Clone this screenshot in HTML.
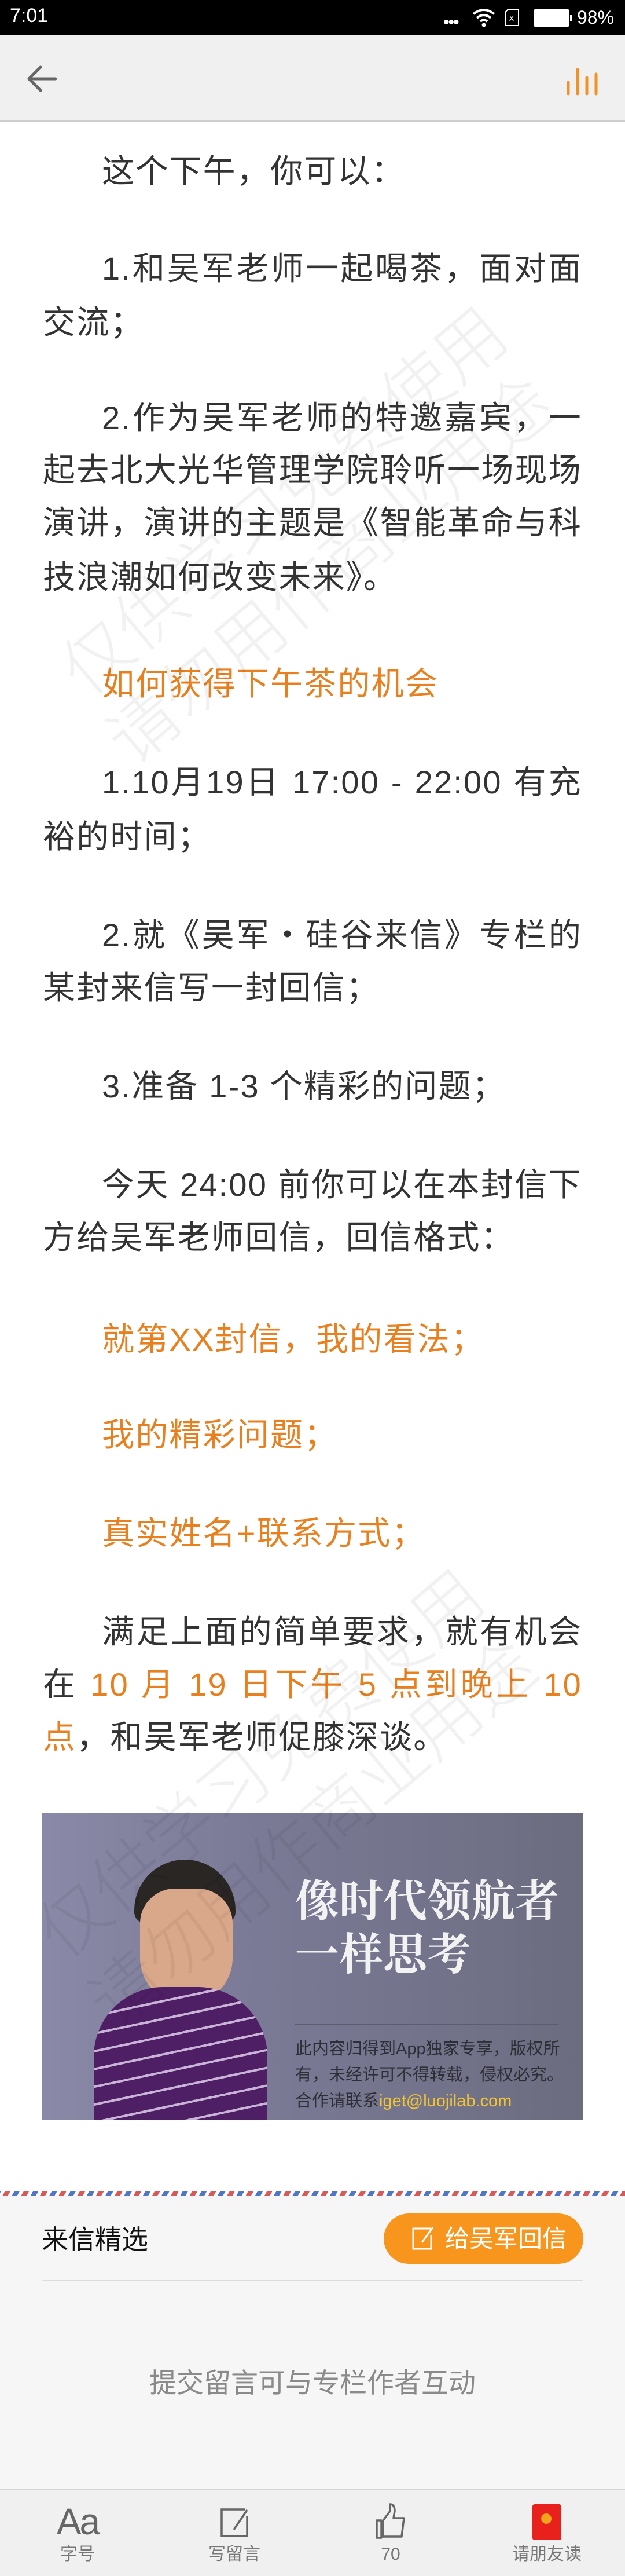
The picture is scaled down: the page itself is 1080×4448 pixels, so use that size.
<!DOCTYPE html>
<html><head><meta charset="utf-8">
<style>
*{margin:0;padding:0;box-sizing:border-box}
body{width:1080px;height:4448px;position:relative;background:#fff;overflow:hidden;font-family:"Liberation Sans","Noto Sans CJK SC",sans-serif}
.sb{position:absolute;left:0;top:0;width:1080px;height:60px;background:#000;color:#fff}
.nav{position:absolute;left:0;top:60px;width:1080px;height:150px;background:#f0f0f0;border-bottom:2px solid #cfcfcf}
.l{position:absolute;left:74px;width:932px;height:91px;line-height:91px;font-size:56px;letter-spacing:2.2px;color:#333;white-space:nowrap}
.j{text-align:justify;text-align-last:justify}
.i{text-indent:102px}
.o{color:#e9801f}
.wm{position:absolute;color:rgba(0,0,0,0.055);font-size:120px;white-space:nowrap;transform-origin:left top;font-weight:300;z-index:5;pointer-events:none}
</style></head><body>
<div class="sb">
 <div style="position:absolute;left:17px;top:8px;font-size:34px;font-family:'Liberation Sans',sans-serif">7:01</div>
 <div style="position:absolute;left:766px;top:22px;font-size:30px;letter-spacing:-2px">•••</div>
 <svg style="position:absolute;left:816px;top:14px" width="40" height="34" viewBox="0 0 40 34"><path d="M2 10 Q20 -4 38 10 M8 17 Q20 7 32 17 M14 23 Q20 18 26 23" stroke="#fff" stroke-width="4" fill="none"/><circle cx="20" cy="29" r="3.5" fill="#fff"/></svg>
 <svg style="position:absolute;left:872px;top:14px" width="26" height="32"><path d="M6 2 H24 V30 H2 V6 Z" stroke="#fff" stroke-width="2" fill="none"/><text x="8" y="22" font-size="16" fill="#fff" font-family="Liberation Sans">x</text></svg>
 <div style="position:absolute;left:922px;top:16px;width:62px;height:30px;background:#fff;border-radius:3px"></div>
 <div style="position:absolute;left:985px;top:26px;width:4px;height:10px;background:#fff"></div>
 <div style="position:absolute;left:997px;top:12px;font-size:32px">98%</div>
</div>
<div class="nav">
 <svg style="position:absolute;left:44px;top:52px" width="56" height="48" viewBox="0 0 56 48"><path d="M52 24 H6 M26 4 L6 24 L26 44" stroke="#666" stroke-width="5" fill="none" stroke-linecap="round" stroke-linejoin="round"/></svg>
 <svg style="position:absolute;left:976px;top:48px" width="60" height="60"><g stroke="#f39224" stroke-width="5" stroke-linecap="round"><path d="M6 34 V54 M22 12 V54 M38 26 V54 M54 20 V54"/></g></svg>
</div>

<div class="l" style="top:250px;left:176px;width:auto">这个下午，你可以：</div>
<div class="l j i" style="top:418px">1.和吴军老师一起喝茶，面对面</div>
<div class="l" style="top:511px">交流；</div>
<div class="l j i" style="top:676px">2.作为吴军老师的特邀嘉宾，一</div>
<div class="l j" style="top:766px">起去北大光华管理学院聆听一场现场</div>
<div class="l j" style="top:857px">演讲，演讲的主题是《智能革命与科</div>
<div class="l" style="top:951px">技浪潮如何改变未来》。</div>
<div class="l i o" style="top:1135px">如何获得下午茶的机会</div>
<div class="l j i" style="top:1305px">1.10月19日 17:00 - 22:00 有充</div>
<div class="l" style="top:1399px">裕的时间；</div>
<div class="l j i" style="top:1569px">2.就《吴军・硅谷来信》专栏的</div>
<div class="l" style="top:1660px">某封来信写一封回信；</div>
<div class="l i" style="top:1830px">3.准备 1-3 个精彩的问题；</div>
<div class="l j i" style="top:2000px">今天 24:00 前你可以在本封信下</div>
<div class="l" style="top:2091px">方给吴军老师回信，回信格式：</div>
<div class="l i o" style="top:2267px">就第XX封信，我的看法；</div>
<div class="l i o" style="top:2432px">我的精彩问题；</div>
<div class="l i o" style="top:2602px">真实姓名+联系方式；</div>
<div class="l j i" style="top:2772px">满足上面的简单要求，就有机会</div>
<div class="l j" style="top:2863px"><span>在</span> <span class="o">10 月 19 日下午 5 点到晚上 10</span></div>
<div class="l" style="top:2954px"><span class="o">点</span>，和吴军老师促膝深谈。</div>

<div style="position:absolute;left:72px;top:3131px;width:936px;height:529px;background:linear-gradient(90deg,#8a8aa8 0%,#7a7a96 40%,#6c6c80 100%);overflow:hidden">
 <div style="position:absolute;left:160px;top:80px;width:175px;height:110px;background:#2a2624;border-radius:90px 90px 20px 20px"></div>
 <div style="position:absolute;left:170px;top:130px;width:160px;height:200px;background:#d9a88a;border-radius:60px 60px 80px 80px"></div>
 <div style="position:absolute;left:90px;top:300px;width:300px;height:260px;background:repeating-linear-gradient(-12deg,#4e1f64 0 26px,#c9b4d8 26px 30px);border-radius:120px 120px 0 0"></div>
 <div style="position:absolute;left:438px;top:100px;color:#f2f2f2;font-family:'Noto Serif CJK SC',serif;font-weight:bold;font-size:76px;line-height:92px;white-space:nowrap">像时代领航者<br>一样思考</div>
 <div style="position:absolute;left:438px;top:363px;width:455px;height:2px;background:#5d5d70"></div>
 <div style="position:absolute;left:438px;top:385px;color:#2e2e36;font-size:29px;line-height:45px;white-space:nowrap">此内容归得到App独家专享，版权所<br>有，未经许可不得转载，侵权必究。<br>合作请联系<span style="color:#f2c531">iget@luojilab.com</span></div>
</div>

<div class="wm" style="left:60px;top:1100px;transform:rotate(-40deg)">仅供学习免费使用</div>
<div class="wm" style="left:140px;top:1220px;transform:rotate(-40deg)">请勿用作商业用途</div>
<div class="wm" style="left:20px;top:3280px;transform:rotate(-40deg)">仅供学习免费使用</div>
<div class="wm" style="left:110px;top:3400px;transform:rotate(-40deg)">请勿用作商业用途</div>

<div style="position:absolute;left:0;top:3784px;width:1080px;height:516px;background:#f6f6f6"></div>
<div style="position:absolute;left:0;top:3784px;width:1080px;height:8px;background:repeating-linear-gradient(-60deg,#d9585a 0 8px,#fff 8px 14px,#5175c9 14px 22px,#fff 22px 28px)"></div>
<div style="position:absolute;left:72px;top:3838px;font-size:46px;line-height:58px;color:#111">来信精选</div>
<div style="position:absolute;left:663px;top:3822px;width:345px;height:87px;border-radius:44px;background:#f7951d;color:#fff;font-size:42px;line-height:87px">
 <svg style="position:absolute;left:48px;top:22px" width="40" height="42"><path d="M33 4 H3 V39 H34 V16" stroke="#fff" stroke-width="3" fill="none"/><path d="M37 2 L18 28" stroke="#fff" stroke-width="3"/></svg>
 <span style="position:absolute;left:106px">给吴军回信</span></div>
<div style="position:absolute;left:72px;top:3937px;width:936px;height:2px;background:#dcdcdc"></div>
<div style="position:absolute;left:0;top:4085px;width:1080px;text-align:center;font-size:47px;line-height:60px;color:#8a8a8a">提交留言可与专栏作者互动</div>

<div style="position:absolute;left:0;top:4298px;width:1080px;height:150px;background:#f0f0f0;border-top:2px solid #d4d4d4"></div>
<div style="position:absolute;left:94px;top:4320px;width:80px;text-align:center;font-size:64px;line-height:68px;color:#666;letter-spacing:-3px">Aa</div>
<svg style="position:absolute;left:380px;top:4330px" width="52" height="52"><path d="M44 3 H3 V49 H47 V14" stroke="#666" stroke-width="3.5" fill="none"/><path d="M47 4 L24 38" stroke="#666" stroke-width="3.5"/></svg>
<svg style="position:absolute;left:648px;top:4322px" width="54" height="62"><path d="M3 30 H11 V60 H3 Z M14 30 L26 14 L26 2 Q34 2 34 14 L32 26 H50 L46 58 H14 Z" stroke="#666" stroke-width="3.5" fill="none" stroke-linejoin="round"/></svg>
<div style="position:absolute;left:920px;top:4324px;width:50px;height:62px;background:#e8211c;border-radius:4px"></div>
<div style="position:absolute;left:935px;top:4340px;width:18px;height:18px;border-radius:50%;background:#f7a21b"></div>
<div style="position:absolute;left:84px;top:4392px;width:100px;text-align:center;font-size:30px;line-height:38px;color:#777">字号</div>
<div style="position:absolute;left:340px;top:4392px;width:130px;text-align:center;font-size:30px;line-height:38px;color:#777">写留言</div>
<div style="position:absolute;left:625px;top:4392px;width:100px;text-align:center;font-size:30px;line-height:38px;color:#777">70</div>
<div style="position:absolute;left:870px;top:4392px;width:150px;text-align:center;font-size:30px;line-height:38px;color:#777">请朋友读</div>
</body></html>
